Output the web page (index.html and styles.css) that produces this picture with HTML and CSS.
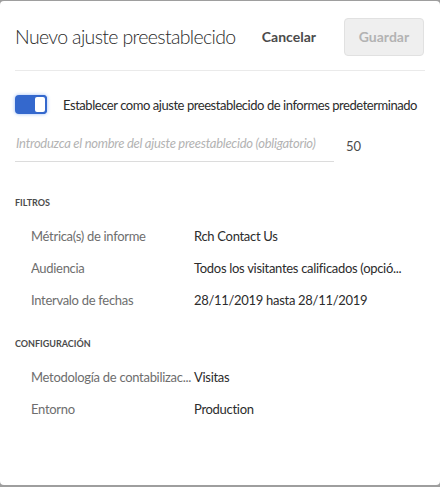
FILE: index.html
```html
<!DOCTYPE html>
<html lang="es">
<head>
<meta charset="utf-8">
<link rel="stylesheet" href="styles.css">
</head>
<body>
<div class="dialog">
  <div class="header">
    <h1 class="title">Nuevo ajuste preestablecido</h1>
    <button class="btn-cancel">Cancelar</button>
    <button class="btn-save" disabled>Guardar</button>
  </div>
  <div class="divider"></div>
  <div class="toggle-row">
    <span class="switch"><span class="knob"></span></span>
    <span class="toggle-label">Establecer como ajuste preestablecido de informes predeterminado</span>
  </div>
  <div class="name-row">
    <div class="name-field">Introduzca el nombre del ajuste preestablecido (obligatorio)</div>
    <span class="count">50</span>
  </div>
  <div class="section">
    <div class="section-title">FILTROS</div>
    <div class="row"><span class="key">Métrica(s) de informe</span><span class="val">Rch Contact Us</span></div>
    <div class="row"><span class="key">Audiencia</span><span class="val">Todos los visitantes calificados (opció...</span></div>
    <div class="row"><span class="key">Intervalo de fechas</span><span class="val">28/11/2019 hasta 28/11/2019</span></div>
  </div>
  <div class="section second">
    <div class="section-title">CONFIGURACIÓN</div>
    <div class="row"><span class="key">Metodología de contabilizac...</span><span class="val">Visitas</span></div>
    <div class="row"><span class="key">Entorno</span><span class="val">Production</span></div>
  </div>
</div>
</body>
</html>
```

FILE: styles.css
```css
html, body {
  margin: 0;
  padding: 0;
}
body {
  background: #9e9e9e;
  font-family: Lato, "Open Sans", sans-serif;
  height: 487px;
  overflow: hidden;
}
.dialog {
  margin-top: 1px;
  height: 484px;
  background: #fff;
  border-radius: 4px;
  box-sizing: border-box;
  padding: 0 15px;
}
.header {
  display: flex;
  align-items: center;
  height: 69px;
  padding-top: 2px;
  box-sizing: border-box;
  white-space: nowrap;
}
.title {
  margin: 0;
  font-weight: 300;
  font-size: 19.5px;
  letter-spacing: -0.65px;
  color: #2c2c2c;
  flex: 1;
}
.btn-cancel {
  background: none;
  border: none;
  padding: 0;
  font-family: inherit;
  font-weight: 700;
  font-size: 14px;
  color: #4b4b4b;
  margin-right: 28px;
}
.btn-save {
  width: 80px;
  height: 38px;
  margin-right: 1px;
  border: 1px solid #e1e1e1;
  border-radius: 4px;
  background: #efefef;
  color: #b3b3b3;
  font-family: inherit;
  font-weight: 700;
  font-size: 14px;
  padding: 0;
}
.divider {
  height: 1px;
  background: #eaeaea;
}
.toggle-row {
  display: flex;
  align-items: center;
  margin-top: 24px;
  height: 19px;
  white-space: nowrap;
}
.switch {
  width: 32px;
  height: 19px;
  flex: none;
  box-sizing: border-box;
  border-radius: 4px;
  background: #3468cd;
  box-shadow: 0 0 3px 1px rgba(80, 140, 240, 0.35);
  display: flex;
  justify-content: flex-end;
}
.knob {
  width: 14px;
  height: 19px;
  box-sizing: border-box;
  background: #fff;
  border: 2px solid #3468cd;
  border-radius: 4px;
}
.toggle-label {
  margin-left: 16px;
  font-size: 13px;
  letter-spacing: -0.45px;
  color: #2c2c2c;
}
.name-row {
  display: flex;
  align-items: center;
  margin-top: 15px;
  white-space: nowrap;
}
.name-field {
  width: 319px;
  box-sizing: border-box;
  padding: 6px 1px 10px;
  line-height: 16px;
  border-bottom: 1px solid #dcdcdc;
  font-style: italic;
  font-size: 13px;
  letter-spacing: -0.28px;
  color: #b3b3b3;
  overflow: hidden;
}
.count {
  margin-left: 12px;
  font-size: 13px;
  color: #4b4b4b;
}
.section {
  margin-top: 35px;
}
.section.second {
  margin-top: 22px;
}
.section-title {
  font-size: 9px;
  line-height: 12px;
  font-weight: 700;
  color: #4b4b4b;
  margin-bottom: 11px;
}
.row {
  display: flex;
  height: 32px;
  align-items: center;
  padding-left: 16px;
  font-size: 13px;
  letter-spacing: -0.3px;
  white-space: nowrap;
}
.key {
  width: 163px;
  flex: none;
  overflow: hidden;
  color: #6e6e6e;
}
.val {
  color: #2c2c2c;
}
```
